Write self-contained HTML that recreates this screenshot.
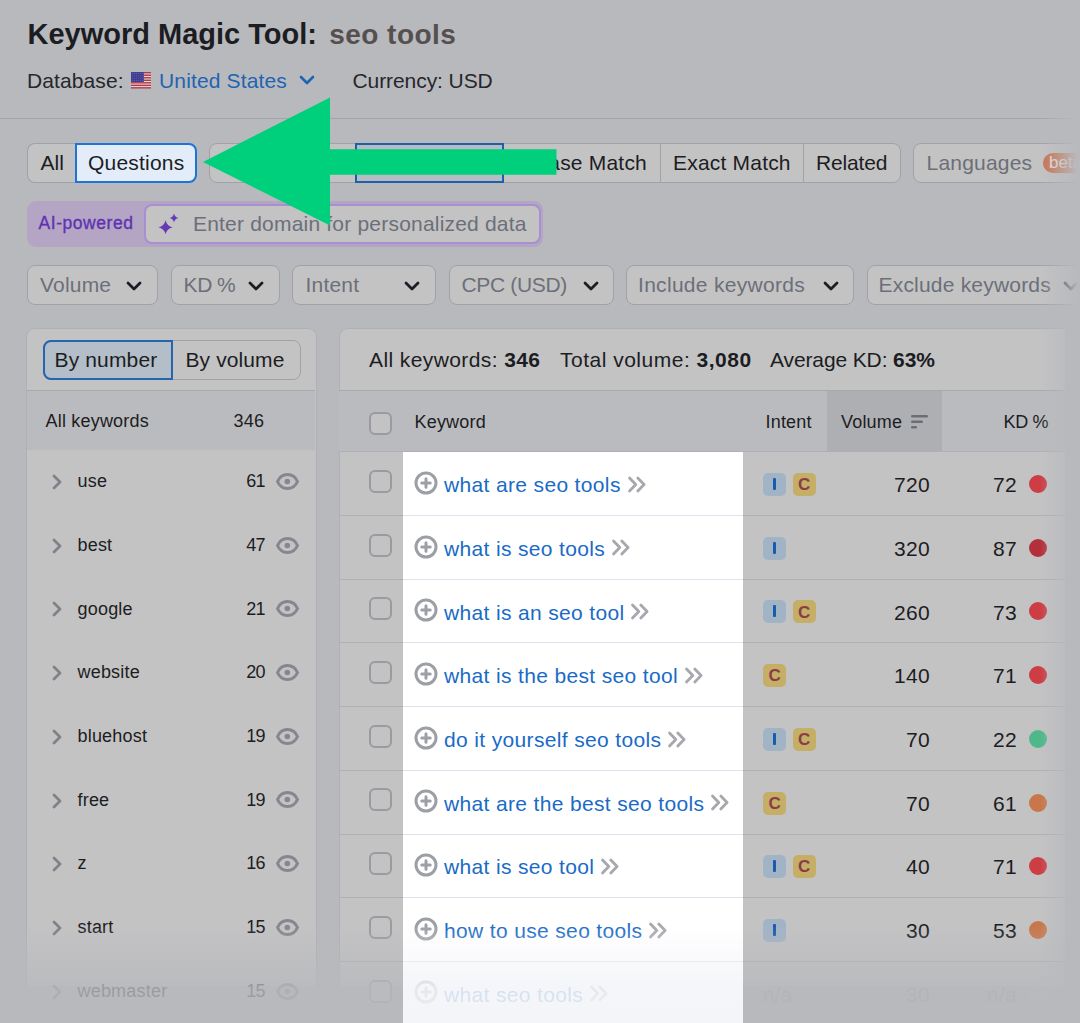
<!DOCTYPE html>
<html><head><meta charset="utf-8"><style>
html,body{margin:0;padding:0;width:1080px;height:1023px;overflow:hidden;background:#b8b9bd;}
body{position:relative;font-family:"Liberation Sans", sans-serif;}
.t{position:absolute;white-space:nowrap;}
b{font-weight:700}
</style></head><body>
<div class="t" style="left:27.5px;top:20.0px;font-size:29px;line-height:29px;color:#1c1d22;font-weight:700;letter-spacing:0px;">Keyword Magic Tool:</div><div class="t" style="left:329.3px;top:20.6px;font-size:28px;line-height:28px;color:#55504f;font-weight:700;letter-spacing:0.45px;">seo tools</div><div class="t" style="left:27.0px;top:70.1px;font-size:21px;line-height:21px;color:#26272c;font-weight:400;letter-spacing:0.1px;">Database:</div><svg style="position:absolute;left:131px;top:71.6px" width="20" height="17" viewBox="0 0 20 17"><rect x="0" y="0" width="20" height="16.4" fill="#dcdce2"/><rect x="0" y="0.00" width="20" height="1.45" fill="#b33a44"/><rect x="0" y="2.52" width="20" height="1.45" fill="#b33a44"/><rect x="0" y="5.05" width="20" height="1.45" fill="#b33a44"/><rect x="0" y="7.57" width="20" height="1.45" fill="#b33a44"/><rect x="0" y="10.09" width="20" height="1.45" fill="#b33a44"/><rect x="0" y="12.62" width="20" height="1.45" fill="#b33a44"/><rect x="0" y="15.14" width="20" height="1.45" fill="#b33a44"/><rect x="0" y="0" width="12.8" height="10" fill="#403d92"/><circle cx="1.50" cy="1.40" r="0.55" fill="#6664ac"/><circle cx="1.50" cy="3.75" r="0.55" fill="#6664ac"/><circle cx="1.50" cy="6.10" r="0.55" fill="#6664ac"/><circle cx="1.50" cy="8.45" r="0.55" fill="#6664ac"/><circle cx="3.55" cy="1.40" r="0.55" fill="#6664ac"/><circle cx="3.55" cy="3.75" r="0.55" fill="#6664ac"/><circle cx="3.55" cy="6.10" r="0.55" fill="#6664ac"/><circle cx="3.55" cy="8.45" r="0.55" fill="#6664ac"/><circle cx="5.60" cy="1.40" r="0.55" fill="#6664ac"/><circle cx="5.60" cy="3.75" r="0.55" fill="#6664ac"/><circle cx="5.60" cy="6.10" r="0.55" fill="#6664ac"/><circle cx="5.60" cy="8.45" r="0.55" fill="#6664ac"/><circle cx="7.65" cy="1.40" r="0.55" fill="#6664ac"/><circle cx="7.65" cy="3.75" r="0.55" fill="#6664ac"/><circle cx="7.65" cy="6.10" r="0.55" fill="#6664ac"/><circle cx="7.65" cy="8.45" r="0.55" fill="#6664ac"/><circle cx="9.70" cy="1.40" r="0.55" fill="#6664ac"/><circle cx="9.70" cy="3.75" r="0.55" fill="#6664ac"/><circle cx="9.70" cy="6.10" r="0.55" fill="#6664ac"/><circle cx="9.70" cy="8.45" r="0.55" fill="#6664ac"/><circle cx="11.75" cy="1.40" r="0.55" fill="#6664ac"/><circle cx="11.75" cy="3.75" r="0.55" fill="#6664ac"/><circle cx="11.75" cy="6.10" r="0.55" fill="#6664ac"/><circle cx="11.75" cy="8.45" r="0.55" fill="#6664ac"/></svg><div class="t" style="left:159.0px;top:70.1px;font-size:21px;line-height:21px;color:#1e64b2;font-weight:400;letter-spacing:0.15px;">United States</div><svg style="position:absolute;left:299px;top:75px" width="16" height="11" viewBox="0 0 16 11"><path d="M2 2 L8 8 L14 2" fill="none" stroke="#1e64b2" stroke-width="2.6" stroke-linecap="round" stroke-linejoin="round"/></svg><div class="t" style="left:352.5px;top:70.1px;font-size:21px;line-height:21px;color:#26272c;font-weight:400;letter-spacing:-0.08px;">Currency: USD</div><div style="position:absolute;left:0px;top:118px;width:1080px;height:1px;box-sizing:border-box;background:#a3a4a8"></div><div style="position:absolute;left:27px;top:143px;width:49px;height:40px;box-sizing:border-box;background:#c3c3c4;border:1px solid #a0a2a8;border-right:none;border-radius:8px 0 0 8px"></div><div class="t" style="left:40.5px;top:152.4px;font-size:21px;line-height:21px;color:#1c1d22;font-weight:400;letter-spacing:0px;">All</div><div style="position:absolute;left:209px;top:143px;width:692px;height:40px;box-sizing:border-box;background:#c3c3c4;border:1px solid #a0a2a8;border-radius:8px"></div><div style="position:absolute;left:660px;top:143px;width:1px;height:40px;box-sizing:border-box;background:#a0a2a8"></div><div style="position:absolute;left:803px;top:143px;width:1px;height:40px;box-sizing:border-box;background:#a0a2a8"></div><div style="position:absolute;left:355px;top:143px;width:149px;height:40px;box-sizing:border-box;background:#b5bcc6;border:2px solid #1f5fa8"></div><div class="t" style="left:515.0px;top:152.4px;font-size:21px;line-height:21px;color:#1c1d22;font-weight:400;letter-spacing:0.2px;">Phrase Match</div><div class="t" style="left:673.0px;top:152.4px;font-size:21px;line-height:21px;color:#1c1d22;font-weight:400;letter-spacing:0.2px;">Exact Match</div><div class="t" style="left:816.0px;top:152.4px;font-size:21px;line-height:21px;color:#1c1d22;font-weight:400;letter-spacing:-0.15px;">Related</div><div style="position:absolute;left:913px;top:143px;width:200px;height:40px;box-sizing:border-box;background:#c3c3c4;border:1px solid #a0a2a8;border-radius:8px"></div><div class="t" style="left:926.5px;top:152.4px;font-size:21px;line-height:21px;color:#6c6f78;font-weight:400;letter-spacing:0.2px;">Languages</div><div style="position:absolute;left:1043px;top:153px;width:50px;height:20px;box-sizing:border-box;background:#c8704a;border-radius:10px"></div><div class="t" style="left:1049.0px;top:154.1px;font-size:17px;line-height:17px;color:#e4e2e2;font-weight:400;letter-spacing:0px;">beta</div><div style="position:absolute;left:27px;top:201px;width:516px;height:46px;box-sizing:border-box;background:#b4a5c4;border-radius:9px"></div><div class="t" style="left:38.5px;top:214.6px;font-size:17.5px;line-height:17.5px;color:#5f33b0;font-weight:400;letter-spacing:0.55px;-webkit-text-stroke:0.35px #5f33b0">AI-powered</div><div style="position:absolute;left:144px;top:204px;width:397px;height:40px;box-sizing:border-box;background:#c3c3c4;border:2px solid #a88fd0;border-radius:8px"></div><svg style="position:absolute;left:157px;top:212px" width="24" height="24" viewBox="0 0 24 24"><path d="M8.55 8.15 Q9.850000000000001 13.95 15.65 15.25 Q9.850000000000001 16.55 8.55 22.35 Q7.250000000000001 16.55 1.450000000000001 15.25 Q7.250000000000001 13.95 8.55 8.15Z M17 1.4500000000000002 Q17.8 5.15 21.5 5.95 Q17.8 6.75 17 10.45 Q16.2 6.75 12.5 5.95 Q16.2 5.15 17 1.4500000000000002Z" fill="#6639b5"/></svg><div class="t" style="left:193.0px;top:212.8px;font-size:21px;line-height:21px;color:#6c6f78;font-weight:400;letter-spacing:0.2px;">Enter domain for personalized data</div><div style="position:absolute;left:27px;top:265px;width:131px;height:40px;box-sizing:border-box;background:#c3c3c4;border:1px solid #a0a2a8;border-radius:8px"></div><div class="t" style="left:40.0px;top:274.2px;font-size:21px;line-height:21px;color:#6c6f78;font-weight:400;letter-spacing:0.2px;">Volume</div><svg style="position:absolute;left:124.5px;top:279.8px" width="18" height="12" viewBox="0 0 18 12"><path d="M3 3 L9 9 L15 3" fill="none" stroke="#1c1d22" stroke-width="2.8" stroke-linecap="round" stroke-linejoin="round"/></svg><div style="position:absolute;left:171px;top:265px;width:109px;height:40px;box-sizing:border-box;background:#c3c3c4;border:1px solid #a0a2a8;border-radius:8px"></div><div class="t" style="left:183.5px;top:274.2px;font-size:21px;line-height:21px;color:#6c6f78;font-weight:400;letter-spacing:-0.3px;word-spacing:-0.5px">KD %</div><svg style="position:absolute;left:246.5px;top:279.8px" width="18" height="12" viewBox="0 0 18 12"><path d="M3 3 L9 9 L15 3" fill="none" stroke="#1c1d22" stroke-width="2.8" stroke-linecap="round" stroke-linejoin="round"/></svg><div style="position:absolute;left:292px;top:265px;width:144px;height:40px;box-sizing:border-box;background:#c3c3c4;border:1px solid #a0a2a8;border-radius:8px"></div><div class="t" style="left:305.5px;top:274.2px;font-size:21px;line-height:21px;color:#6c6f78;font-weight:400;letter-spacing:0.2px;">Intent</div><svg style="position:absolute;left:403px;top:279.8px" width="18" height="12" viewBox="0 0 18 12"><path d="M3 3 L9 9 L15 3" fill="none" stroke="#1c1d22" stroke-width="2.8" stroke-linecap="round" stroke-linejoin="round"/></svg><div style="position:absolute;left:449px;top:265px;width:165px;height:40px;box-sizing:border-box;background:#c3c3c4;border:1px solid #a0a2a8;border-radius:8px"></div><div class="t" style="left:461.5px;top:274.2px;font-size:21px;line-height:21px;color:#6c6f78;font-weight:400;letter-spacing:-0.35px;">CPC (USD)</div><svg style="position:absolute;left:581.5px;top:279.8px" width="18" height="12" viewBox="0 0 18 12"><path d="M3 3 L9 9 L15 3" fill="none" stroke="#1c1d22" stroke-width="2.8" stroke-linecap="round" stroke-linejoin="round"/></svg><div style="position:absolute;left:626px;top:265px;width:228px;height:40px;box-sizing:border-box;background:#c3c3c4;border:1px solid #a0a2a8;border-radius:8px"></div><div class="t" style="left:638.0px;top:274.2px;font-size:21px;line-height:21px;color:#6c6f78;font-weight:400;letter-spacing:0.3px;">Include keywords</div><svg style="position:absolute;left:821.5px;top:279.8px" width="18" height="12" viewBox="0 0 18 12"><path d="M3 3 L9 9 L15 3" fill="none" stroke="#1c1d22" stroke-width="2.8" stroke-linecap="round" stroke-linejoin="round"/></svg><div style="position:absolute;left:867px;top:265px;width:250px;height:40px;box-sizing:border-box;background:#c3c3c4;border:1px solid #a0a2a8;border-radius:8px"></div><div class="t" style="left:878.5px;top:274.2px;font-size:21px;line-height:21px;color:#6c6f78;font-weight:400;letter-spacing:0.2px;">Exclude keywords</div><svg style="position:absolute;left:1062px;top:279.8px" width="18" height="12" viewBox="0 0 18 12"><path d="M3 3 L9 9 L15 3" fill="none" stroke="#1c1d22" stroke-width="2.8" stroke-linecap="round" stroke-linejoin="round"/></svg><div style="position:absolute;left:26px;top:328px;width:291px;height:658px;box-sizing:border-box;background:#c3c3c4;border:1px solid #b0b1b5;border-bottom:none;border-radius:9px 9px 0 0"></div><div style="position:absolute;left:43px;top:340px;width:258px;height:40px;box-sizing:border-box;background:#c3c3c4;border:1px solid #a0a2a8;border-radius:8px"></div><div style="position:absolute;left:43px;top:340px;width:130px;height:40px;box-sizing:border-box;background:#b3bec8;border:2px solid #2466ad;border-radius:8px 0 0 8px"></div><div class="t" style="left:54.5px;top:349.0px;font-size:21px;line-height:21px;color:#1c1d22;font-weight:400;letter-spacing:0.15px;">By number</div><div class="t" style="left:185.5px;top:349.0px;font-size:21px;line-height:21px;color:#1c1d22;font-weight:400;letter-spacing:0.1px;">By volume</div><div style="position:absolute;left:27px;top:390px;width:288px;height:1px;box-sizing:border-box;background:#a8a9ad"></div><div style="position:absolute;left:27px;top:391px;width:288px;height:59px;box-sizing:border-box;background:#babbbe"></div><div class="t" style="left:45.5px;top:411.6px;font-size:18px;line-height:18px;color:#1c1d22;font-weight:400;letter-spacing:0.2px;">All keywords</div><div class="t" style="left:233.5px;top:411.6px;font-size:18px;line-height:18px;color:#1c1d22;font-weight:400;letter-spacing:0.2px;">346</div><svg style="position:absolute;left:50px;top:474.0px" width="14" height="16" viewBox="0 0 14 16"><path d="M4 2 L10 8 L4 14" fill="none" stroke="#808289" stroke-width="2.8" stroke-linecap="round" stroke-linejoin="round"/></svg><div class="t" style="left:77.5px;top:472.1px;font-size:18px;line-height:18px;color:#1c1d22;font-weight:400;letter-spacing:0.2px;">use</div><div class="t" style="left:200.0px;top:472.1px;font-size:18px;line-height:18px;color:#1c1d22;font-weight:400;letter-spacing:-0.6px;width:65px;text-align:right">61</div><svg style="position:absolute;left:275px;top:471.9px" width="25" height="19" viewBox="0 0 25 19"><path d="M2.5 9.5 C6.5 0.2, 18.5 0.2, 22.5 9.5 C18.5 18.8, 6.5 18.8, 2.5 9.5Z" fill="none" stroke="#85878e" stroke-width="3"/><circle cx="12.3" cy="9.5" r="2.8" fill="#85878e"/></svg><svg style="position:absolute;left:50px;top:537.7px" width="14" height="16" viewBox="0 0 14 16"><path d="M4 2 L10 8 L4 14" fill="none" stroke="#808289" stroke-width="2.8" stroke-linecap="round" stroke-linejoin="round"/></svg><div class="t" style="left:77.5px;top:535.8px;font-size:18px;line-height:18px;color:#1c1d22;font-weight:400;letter-spacing:0.2px;">best</div><div class="t" style="left:200.0px;top:535.8px;font-size:18px;line-height:18px;color:#1c1d22;font-weight:400;letter-spacing:-0.6px;width:65px;text-align:right">47</div><svg style="position:absolute;left:275px;top:535.6px" width="25" height="19" viewBox="0 0 25 19"><path d="M2.5 9.5 C6.5 0.2, 18.5 0.2, 22.5 9.5 C18.5 18.8, 6.5 18.8, 2.5 9.5Z" fill="none" stroke="#85878e" stroke-width="3"/><circle cx="12.3" cy="9.5" r="2.8" fill="#85878e"/></svg><svg style="position:absolute;left:50px;top:601.4px" width="14" height="16" viewBox="0 0 14 16"><path d="M4 2 L10 8 L4 14" fill="none" stroke="#808289" stroke-width="2.8" stroke-linecap="round" stroke-linejoin="round"/></svg><div class="t" style="left:77.5px;top:599.5px;font-size:18px;line-height:18px;color:#1c1d22;font-weight:400;letter-spacing:0.2px;">google</div><div class="t" style="left:200.0px;top:599.5px;font-size:18px;line-height:18px;color:#1c1d22;font-weight:400;letter-spacing:-0.6px;width:65px;text-align:right">21</div><svg style="position:absolute;left:275px;top:599.3px" width="25" height="19" viewBox="0 0 25 19"><path d="M2.5 9.5 C6.5 0.2, 18.5 0.2, 22.5 9.5 C18.5 18.8, 6.5 18.8, 2.5 9.5Z" fill="none" stroke="#85878e" stroke-width="3"/><circle cx="12.3" cy="9.5" r="2.8" fill="#85878e"/></svg><svg style="position:absolute;left:50px;top:665.1px" width="14" height="16" viewBox="0 0 14 16"><path d="M4 2 L10 8 L4 14" fill="none" stroke="#808289" stroke-width="2.8" stroke-linecap="round" stroke-linejoin="round"/></svg><div class="t" style="left:77.5px;top:663.2px;font-size:18px;line-height:18px;color:#1c1d22;font-weight:400;letter-spacing:0.2px;">website</div><div class="t" style="left:200.0px;top:663.2px;font-size:18px;line-height:18px;color:#1c1d22;font-weight:400;letter-spacing:-0.6px;width:65px;text-align:right">20</div><svg style="position:absolute;left:275px;top:663.0px" width="25" height="19" viewBox="0 0 25 19"><path d="M2.5 9.5 C6.5 0.2, 18.5 0.2, 22.5 9.5 C18.5 18.8, 6.5 18.8, 2.5 9.5Z" fill="none" stroke="#85878e" stroke-width="3"/><circle cx="12.3" cy="9.5" r="2.8" fill="#85878e"/></svg><svg style="position:absolute;left:50px;top:728.8px" width="14" height="16" viewBox="0 0 14 16"><path d="M4 2 L10 8 L4 14" fill="none" stroke="#808289" stroke-width="2.8" stroke-linecap="round" stroke-linejoin="round"/></svg><div class="t" style="left:77.5px;top:726.9px;font-size:18px;line-height:18px;color:#1c1d22;font-weight:400;letter-spacing:0.2px;">bluehost</div><div class="t" style="left:200.0px;top:726.9px;font-size:18px;line-height:18px;color:#1c1d22;font-weight:400;letter-spacing:-0.6px;width:65px;text-align:right">19</div><svg style="position:absolute;left:275px;top:726.7px" width="25" height="19" viewBox="0 0 25 19"><path d="M2.5 9.5 C6.5 0.2, 18.5 0.2, 22.5 9.5 C18.5 18.8, 6.5 18.8, 2.5 9.5Z" fill="none" stroke="#85878e" stroke-width="3"/><circle cx="12.3" cy="9.5" r="2.8" fill="#85878e"/></svg><svg style="position:absolute;left:50px;top:792.5px" width="14" height="16" viewBox="0 0 14 16"><path d="M4 2 L10 8 L4 14" fill="none" stroke="#808289" stroke-width="2.8" stroke-linecap="round" stroke-linejoin="round"/></svg><div class="t" style="left:77.5px;top:790.6px;font-size:18px;line-height:18px;color:#1c1d22;font-weight:400;letter-spacing:0.2px;">free</div><div class="t" style="left:200.0px;top:790.6px;font-size:18px;line-height:18px;color:#1c1d22;font-weight:400;letter-spacing:-0.6px;width:65px;text-align:right">19</div><svg style="position:absolute;left:275px;top:790.4px" width="25" height="19" viewBox="0 0 25 19"><path d="M2.5 9.5 C6.5 0.2, 18.5 0.2, 22.5 9.5 C18.5 18.8, 6.5 18.8, 2.5 9.5Z" fill="none" stroke="#85878e" stroke-width="3"/><circle cx="12.3" cy="9.5" r="2.8" fill="#85878e"/></svg><svg style="position:absolute;left:50px;top:856.2px" width="14" height="16" viewBox="0 0 14 16"><path d="M4 2 L10 8 L4 14" fill="none" stroke="#808289" stroke-width="2.8" stroke-linecap="round" stroke-linejoin="round"/></svg><div class="t" style="left:77.5px;top:854.3px;font-size:18px;line-height:18px;color:#1c1d22;font-weight:400;letter-spacing:0.2px;">z</div><div class="t" style="left:200.0px;top:854.3px;font-size:18px;line-height:18px;color:#1c1d22;font-weight:400;letter-spacing:-0.6px;width:65px;text-align:right">16</div><svg style="position:absolute;left:275px;top:854.1px" width="25" height="19" viewBox="0 0 25 19"><path d="M2.5 9.5 C6.5 0.2, 18.5 0.2, 22.5 9.5 C18.5 18.8, 6.5 18.8, 2.5 9.5Z" fill="none" stroke="#85878e" stroke-width="3"/><circle cx="12.3" cy="9.5" r="2.8" fill="#85878e"/></svg><svg style="position:absolute;left:50px;top:919.9000000000001px" width="14" height="16" viewBox="0 0 14 16"><path d="M4 2 L10 8 L4 14" fill="none" stroke="#808289" stroke-width="2.8" stroke-linecap="round" stroke-linejoin="round"/></svg><div class="t" style="left:77.5px;top:918.0px;font-size:18px;line-height:18px;color:#1c1d22;font-weight:400;letter-spacing:0.2px;">start</div><div class="t" style="left:200.0px;top:918.0px;font-size:18px;line-height:18px;color:#1c1d22;font-weight:400;letter-spacing:-0.6px;width:65px;text-align:right">15</div><svg style="position:absolute;left:275px;top:917.8px" width="25" height="19" viewBox="0 0 25 19"><path d="M2.5 9.5 C6.5 0.2, 18.5 0.2, 22.5 9.5 C18.5 18.8, 6.5 18.8, 2.5 9.5Z" fill="none" stroke="#85878e" stroke-width="3"/><circle cx="12.3" cy="9.5" r="2.8" fill="#85878e"/></svg><svg style="position:absolute;left:50px;top:983.6px" width="14" height="16" viewBox="0 0 14 16"><path d="M4 2 L10 8 L4 14" fill="none" stroke="#808289" stroke-width="2.8" stroke-linecap="round" stroke-linejoin="round"/></svg><div class="t" style="left:77.5px;top:981.7px;font-size:18px;line-height:18px;color:#1c1d22;font-weight:400;letter-spacing:0.2px;">webmaster</div><div class="t" style="left:200.0px;top:981.7px;font-size:18px;line-height:18px;color:#1c1d22;font-weight:400;letter-spacing:-0.6px;width:65px;text-align:right">15</div><svg style="position:absolute;left:275px;top:981.5px" width="25" height="19" viewBox="0 0 25 19"><path d="M2.5 9.5 C6.5 0.2, 18.5 0.2, 22.5 9.5 C18.5 18.8, 6.5 18.8, 2.5 9.5Z" fill="none" stroke="#85878e" stroke-width="3"/><circle cx="12.3" cy="9.5" r="2.8" fill="#85878e"/></svg><div style="position:absolute;left:339px;top:328px;width:726px;height:658px;box-sizing:border-box;background:#c3c3c4;border:1px solid #b0b1b5;border-bottom:none;border-right:none;border-radius:9px 0 0 0"></div><div class="t" style="left:369.0px;top:349.2px;font-size:21px;line-height:21px;color:#1c1d22;font-weight:400;letter-spacing:0.4px;">All keywords: <b>346</b></div><div class="t" style="left:560.0px;top:349.2px;font-size:21px;line-height:21px;color:#1c1d22;font-weight:400;letter-spacing:0.5px;">Total volume: <b>3,080</b></div><div class="t" style="left:770.0px;top:349.2px;font-size:21px;line-height:21px;color:#1c1d22;font-weight:400;letter-spacing:-0.12px;">Average KD: <b>63%</b></div><div style="position:absolute;left:339px;top:390px;width:726px;height:1px;box-sizing:border-box;background:#a8a9ad"></div><div style="position:absolute;left:339px;top:391px;width:726px;height:61px;box-sizing:border-box;background:#babbbe"></div><div style="position:absolute;left:827px;top:391px;width:115px;height:61px;box-sizing:border-box;background:#aeafb2"></div><div style="position:absolute;left:339px;top:451px;width:726px;height:1px;box-sizing:border-box;background:#afb0b4"></div><div style="position:absolute;left:368.8px;top:412.1px;width:23px;height:23px;box-sizing:border-box;background:#c3c3c4;border:2px solid #999ba1;border-radius:6px"></div><div class="t" style="left:414.5px;top:413.1px;font-size:18px;line-height:18px;color:#1c1d22;font-weight:400;letter-spacing:0.2px;">Keyword</div><div class="t" style="left:765.5px;top:413.1px;font-size:18px;line-height:18px;color:#1c1d22;font-weight:400;letter-spacing:0.2px;">Intent</div><div class="t" style="left:841.0px;top:413.1px;font-size:18px;line-height:18px;color:#1c1d22;font-weight:400;letter-spacing:0.2px;">Volume</div><svg style="position:absolute;left:910px;top:414px" width="20" height="16" viewBox="0 0 20 16"><rect x="1" y="1" width="17" height="2.6" rx="1.3" fill="#6b6e75"/><rect x="1" y="6.5" width="12" height="2.6" rx="1.3" fill="#6b6e75"/><rect x="1" y="12" width="6" height="2.6" rx="1.3" fill="#6b6e75"/></svg><div class="t" style="left:1003.5px;top:413.1px;font-size:18px;line-height:18px;color:#1c1d22;font-weight:400;letter-spacing:-0.3px;">KD %</div><div style="position:absolute;left:339px;top:515px;width:726px;height:1px;box-sizing:border-box;background:#afb0b4"></div><div style="position:absolute;left:368.8px;top:469.9px;width:23px;height:23px;box-sizing:border-box;background:#c3c3c4;border:2px solid #999ba1;border-radius:6px"></div><div style="position:absolute;left:763px;top:473px;width:23px;height:23px;box-sizing:border-box;background:#a1b4c6;border-radius:5px"><div style="position:absolute;left:10px;top:4.8px;width:3px;height:12.4px;background:#1a5cab;border-radius:1px"></div></div><div style="position:absolute;left:792.5px;top:473px;width:23px;height:23px;box-sizing:border-box;background:#c5ae65;border-radius:5px"></div><div class="t" style="left:798.0px;top:476.1px;font-size:17px;line-height:17px;color:#8a3c47;font-weight:700;letter-spacing:0px;">C</div><div class="t" style="left:830.0px;top:474.2px;font-size:21px;line-height:21px;color:#1c1d22;font-weight:400;letter-spacing:0.3px;width:100px;text-align:right">720</div><div class="t" style="left:917.0px;top:474.2px;font-size:21px;line-height:21px;color:#1c1d22;font-weight:400;letter-spacing:0.3px;width:100px;text-align:right">72</div><div style="position:absolute;left:1029px;top:475px;width:18px;height:18px;box-sizing:border-box;background:#cc3d44;border-radius:50%"></div><div style="position:absolute;left:339px;top:579px;width:726px;height:1px;box-sizing:border-box;background:#afb0b4"></div><div style="position:absolute;left:368.8px;top:533.6px;width:23px;height:23px;box-sizing:border-box;background:#c3c3c4;border:2px solid #999ba1;border-radius:6px"></div><div style="position:absolute;left:763px;top:537px;width:23px;height:23px;box-sizing:border-box;background:#a1b4c6;border-radius:5px"><div style="position:absolute;left:10px;top:4.8px;width:3px;height:12.4px;background:#1a5cab;border-radius:1px"></div></div><div class="t" style="left:830.0px;top:537.9px;font-size:21px;line-height:21px;color:#1c1d22;font-weight:400;letter-spacing:0.3px;width:100px;text-align:right">320</div><div class="t" style="left:917.0px;top:537.9px;font-size:21px;line-height:21px;color:#1c1d22;font-weight:400;letter-spacing:0.3px;width:100px;text-align:right">87</div><div style="position:absolute;left:1029px;top:539px;width:18px;height:18px;box-sizing:border-box;background:#b3303b;border-radius:50%"></div><div style="position:absolute;left:339px;top:642px;width:726px;height:1px;box-sizing:border-box;background:#afb0b4"></div><div style="position:absolute;left:368.8px;top:597.3px;width:23px;height:23px;box-sizing:border-box;background:#c3c3c4;border:2px solid #999ba1;border-radius:6px"></div><div style="position:absolute;left:763px;top:600px;width:23px;height:23px;box-sizing:border-box;background:#a1b4c6;border-radius:5px"><div style="position:absolute;left:10px;top:4.8px;width:3px;height:12.4px;background:#1a5cab;border-radius:1px"></div></div><div style="position:absolute;left:792.5px;top:600px;width:23px;height:23px;box-sizing:border-box;background:#c5ae65;border-radius:5px"></div><div class="t" style="left:798.0px;top:603.5px;font-size:17px;line-height:17px;color:#8a3c47;font-weight:700;letter-spacing:0px;">C</div><div class="t" style="left:830.0px;top:601.6px;font-size:21px;line-height:21px;color:#1c1d22;font-weight:400;letter-spacing:0.3px;width:100px;text-align:right">260</div><div class="t" style="left:917.0px;top:601.6px;font-size:21px;line-height:21px;color:#1c1d22;font-weight:400;letter-spacing:0.3px;width:100px;text-align:right">73</div><div style="position:absolute;left:1029px;top:602px;width:18px;height:18px;box-sizing:border-box;background:#cc3d44;border-radius:50%"></div><div style="position:absolute;left:339px;top:706px;width:726px;height:1px;box-sizing:border-box;background:#afb0b4"></div><div style="position:absolute;left:368.8px;top:661.0px;width:23px;height:23px;box-sizing:border-box;background:#c3c3c4;border:2px solid #999ba1;border-radius:6px"></div><div style="position:absolute;left:763px;top:664px;width:23px;height:23px;box-sizing:border-box;background:#c5ae65;border-radius:5px"></div><div class="t" style="left:768.5px;top:667.2px;font-size:17px;line-height:17px;color:#8a3c47;font-weight:700;letter-spacing:0px;">C</div><div class="t" style="left:830.0px;top:665.3px;font-size:21px;line-height:21px;color:#1c1d22;font-weight:400;letter-spacing:0.3px;width:100px;text-align:right">140</div><div class="t" style="left:917.0px;top:665.3px;font-size:21px;line-height:21px;color:#1c1d22;font-weight:400;letter-spacing:0.3px;width:100px;text-align:right">71</div><div style="position:absolute;left:1029px;top:666px;width:18px;height:18px;box-sizing:border-box;background:#cc3d44;border-radius:50%"></div><div style="position:absolute;left:339px;top:770px;width:726px;height:1px;box-sizing:border-box;background:#afb0b4"></div><div style="position:absolute;left:368.8px;top:724.7px;width:23px;height:23px;box-sizing:border-box;background:#c3c3c4;border:2px solid #999ba1;border-radius:6px"></div><div style="position:absolute;left:763px;top:728px;width:23px;height:23px;box-sizing:border-box;background:#a1b4c6;border-radius:5px"><div style="position:absolute;left:10px;top:4.8px;width:3px;height:12.4px;background:#1a5cab;border-radius:1px"></div></div><div style="position:absolute;left:792.5px;top:728px;width:23px;height:23px;box-sizing:border-box;background:#c5ae65;border-radius:5px"></div><div class="t" style="left:798.0px;top:730.9px;font-size:17px;line-height:17px;color:#8a3c47;font-weight:700;letter-spacing:0px;">C</div><div class="t" style="left:830.0px;top:729.0px;font-size:21px;line-height:21px;color:#1c1d22;font-weight:400;letter-spacing:0.3px;width:100px;text-align:right">70</div><div class="t" style="left:917.0px;top:729.0px;font-size:21px;line-height:21px;color:#1c1d22;font-weight:400;letter-spacing:0.3px;width:100px;text-align:right">22</div><div style="position:absolute;left:1029px;top:730px;width:18px;height:18px;box-sizing:border-box;background:#4fb88a;border-radius:50%"></div><div style="position:absolute;left:339px;top:834px;width:726px;height:1px;box-sizing:border-box;background:#afb0b4"></div><div style="position:absolute;left:368.8px;top:788.4px;width:23px;height:23px;box-sizing:border-box;background:#c3c3c4;border:2px solid #999ba1;border-radius:6px"></div><div style="position:absolute;left:763px;top:792px;width:23px;height:23px;box-sizing:border-box;background:#c5ae65;border-radius:5px"></div><div class="t" style="left:768.5px;top:794.6px;font-size:17px;line-height:17px;color:#8a3c47;font-weight:700;letter-spacing:0px;">C</div><div class="t" style="left:830.0px;top:792.7px;font-size:21px;line-height:21px;color:#1c1d22;font-weight:400;letter-spacing:0.3px;width:100px;text-align:right">70</div><div class="t" style="left:917.0px;top:792.7px;font-size:21px;line-height:21px;color:#1c1d22;font-weight:400;letter-spacing:0.3px;width:100px;text-align:right">61</div><div style="position:absolute;left:1029px;top:794px;width:18px;height:18px;box-sizing:border-box;background:#c8764a;border-radius:50%"></div><div style="position:absolute;left:339px;top:897px;width:726px;height:1px;box-sizing:border-box;background:#afb0b4"></div><div style="position:absolute;left:368.8px;top:852.1px;width:23px;height:23px;box-sizing:border-box;background:#c3c3c4;border:2px solid #999ba1;border-radius:6px"></div><div style="position:absolute;left:763px;top:855px;width:23px;height:23px;box-sizing:border-box;background:#a1b4c6;border-radius:5px"><div style="position:absolute;left:10px;top:4.8px;width:3px;height:12.4px;background:#1a5cab;border-radius:1px"></div></div><div style="position:absolute;left:792.5px;top:855px;width:23px;height:23px;box-sizing:border-box;background:#c5ae65;border-radius:5px"></div><div class="t" style="left:798.0px;top:858.3px;font-size:17px;line-height:17px;color:#8a3c47;font-weight:700;letter-spacing:0px;">C</div><div class="t" style="left:830.0px;top:856.4px;font-size:21px;line-height:21px;color:#1c1d22;font-weight:400;letter-spacing:0.3px;width:100px;text-align:right">40</div><div class="t" style="left:917.0px;top:856.4px;font-size:21px;line-height:21px;color:#1c1d22;font-weight:400;letter-spacing:0.3px;width:100px;text-align:right">71</div><div style="position:absolute;left:1029px;top:857px;width:18px;height:18px;box-sizing:border-box;background:#cc3d44;border-radius:50%"></div><div style="position:absolute;left:339px;top:961px;width:726px;height:1px;box-sizing:border-box;background:#afb0b4"></div><div style="position:absolute;left:368.8px;top:915.8px;width:23px;height:23px;box-sizing:border-box;background:#c3c3c4;border:2px solid #999ba1;border-radius:6px"></div><div style="position:absolute;left:763px;top:919px;width:23px;height:23px;box-sizing:border-box;background:#a1b4c6;border-radius:5px"><div style="position:absolute;left:10px;top:4.8px;width:3px;height:12.4px;background:#1a5cab;border-radius:1px"></div></div><div class="t" style="left:830.0px;top:920.1px;font-size:21px;line-height:21px;color:#1c1d22;font-weight:400;letter-spacing:0.3px;width:100px;text-align:right">30</div><div class="t" style="left:917.0px;top:920.1px;font-size:21px;line-height:21px;color:#1c1d22;font-weight:400;letter-spacing:0.3px;width:100px;text-align:right">53</div><div style="position:absolute;left:1029px;top:921px;width:18px;height:18px;box-sizing:border-box;background:#c8764a;border-radius:50%"></div><div style="position:absolute;left:339px;top:1025px;width:726px;height:1px;box-sizing:border-box;background:#afb0b4"></div><div style="position:absolute;left:368.8px;top:979.5px;width:23px;height:23px;box-sizing:border-box;background:#c3c3c4;border:2px solid #999ba1;border-radius:6px"></div><div class="t" style="left:763.0px;top:983.8px;font-size:21px;line-height:21px;color:#9fa0a4;font-weight:400;letter-spacing:0px;">n/a</div><div class="t" style="left:830.0px;top:983.8px;font-size:21px;line-height:21px;color:#9fa0a4;font-weight:400;letter-spacing:0.3px;width:100px;text-align:right">30</div><div class="t" style="left:917.0px;top:983.8px;font-size:21px;line-height:21px;color:#9fa0a4;font-weight:400;letter-spacing:0.3px;width:100px;text-align:right">n/a</div><div style="position:absolute;left:1029px;top:985px;width:18px;height:18px;box-sizing:border-box;background:#bdbdbf;border-radius:50%"></div><div style="position:absolute;left:0px;top:925px;width:1080px;height:98px;box-sizing:border-box;background:linear-gradient(to bottom, rgba(184,185,189,0) 0px, rgba(184,185,189,0.8) 62px, rgba(184,185,189,0.86) 98px)"></div><div style="position:absolute;left:1040px;top:100px;width:40px;height:923px;box-sizing:border-box;background:linear-gradient(to right, rgba(184,185,189,0), #b8b9bd 38px)"></div>
<div style="position:absolute;left:0;top:0;width:1080px;height:1023px"><div style="position:absolute;left:403px;top:452px;width:340px;height:571px;box-sizing:border-box;background:#ffffff"></div><div style="position:absolute;left:403px;top:515px;width:340px;height:1px;box-sizing:border-box;background:#dde3ec"></div><svg style="position:absolute;left:414.3px;top:470.8px" width="24" height="24" viewBox="0 0 24 24"><circle cx="12" cy="12" r="10" fill="none" stroke="#9c9fa5" stroke-width="3"/><path d="M12 7.8V16.2M7.8 12H16.2" stroke="#9c9fa5" stroke-width="3" stroke-linecap="round"/></svg><div class="t" style="left:444.0px;top:474.2px;font-size:21px;line-height:21px;color:#1a6bc6;font-weight:400;letter-spacing:0.35px;">what are seo tools<span style="display:inline-block;width:5.8px"></span><svg width="20" height="17" viewBox="0 0 20 17" style="vertical-align:-0.5px"><path d="M2.5 2 L8.8 8.5 L2.5 15 M10.8 2 L17.1 8.5 L10.8 15" fill="none" stroke="#a6a8ae" stroke-width="2.8" stroke-linecap="round" stroke-linejoin="round"/></svg></div><div style="position:absolute;left:403px;top:579px;width:340px;height:1px;box-sizing:border-box;background:#dde3ec"></div><svg style="position:absolute;left:414.3px;top:534.5px" width="24" height="24" viewBox="0 0 24 24"><circle cx="12" cy="12" r="10" fill="none" stroke="#9c9fa5" stroke-width="3"/><path d="M12 7.8V16.2M7.8 12H16.2" stroke="#9c9fa5" stroke-width="3" stroke-linecap="round"/></svg><div class="t" style="left:444.0px;top:537.9px;font-size:21px;line-height:21px;color:#1a6bc6;font-weight:400;letter-spacing:0.35px;">what is seo tools<span style="display:inline-block;width:5.8px"></span><svg width="20" height="17" viewBox="0 0 20 17" style="vertical-align:-0.5px"><path d="M2.5 2 L8.8 8.5 L2.5 15 M10.8 2 L17.1 8.5 L10.8 15" fill="none" stroke="#a6a8ae" stroke-width="2.8" stroke-linecap="round" stroke-linejoin="round"/></svg></div><div style="position:absolute;left:403px;top:642px;width:340px;height:1px;box-sizing:border-box;background:#dde3ec"></div><svg style="position:absolute;left:414.3px;top:598.2px" width="24" height="24" viewBox="0 0 24 24"><circle cx="12" cy="12" r="10" fill="none" stroke="#9c9fa5" stroke-width="3"/><path d="M12 7.8V16.2M7.8 12H16.2" stroke="#9c9fa5" stroke-width="3" stroke-linecap="round"/></svg><div class="t" style="left:444.0px;top:601.6px;font-size:21px;line-height:21px;color:#1a6bc6;font-weight:400;letter-spacing:0.35px;">what is an seo tool<span style="display:inline-block;width:5.8px"></span><svg width="20" height="17" viewBox="0 0 20 17" style="vertical-align:-0.5px"><path d="M2.5 2 L8.8 8.5 L2.5 15 M10.8 2 L17.1 8.5 L10.8 15" fill="none" stroke="#a6a8ae" stroke-width="2.8" stroke-linecap="round" stroke-linejoin="round"/></svg></div><div style="position:absolute;left:403px;top:706px;width:340px;height:1px;box-sizing:border-box;background:#dde3ec"></div><svg style="position:absolute;left:414.3px;top:661.9px" width="24" height="24" viewBox="0 0 24 24"><circle cx="12" cy="12" r="10" fill="none" stroke="#9c9fa5" stroke-width="3"/><path d="M12 7.8V16.2M7.8 12H16.2" stroke="#9c9fa5" stroke-width="3" stroke-linecap="round"/></svg><div class="t" style="left:444.0px;top:665.3px;font-size:21px;line-height:21px;color:#1a6bc6;font-weight:400;letter-spacing:0.35px;">what is the best seo tool<span style="display:inline-block;width:5.8px"></span><svg width="20" height="17" viewBox="0 0 20 17" style="vertical-align:-0.5px"><path d="M2.5 2 L8.8 8.5 L2.5 15 M10.8 2 L17.1 8.5 L10.8 15" fill="none" stroke="#a6a8ae" stroke-width="2.8" stroke-linecap="round" stroke-linejoin="round"/></svg></div><div style="position:absolute;left:403px;top:770px;width:340px;height:1px;box-sizing:border-box;background:#dde3ec"></div><svg style="position:absolute;left:414.3px;top:725.6px" width="24" height="24" viewBox="0 0 24 24"><circle cx="12" cy="12" r="10" fill="none" stroke="#9c9fa5" stroke-width="3"/><path d="M12 7.8V16.2M7.8 12H16.2" stroke="#9c9fa5" stroke-width="3" stroke-linecap="round"/></svg><div class="t" style="left:444.0px;top:729.0px;font-size:21px;line-height:21px;color:#1a6bc6;font-weight:400;letter-spacing:0.35px;">do it yourself seo tools<span style="display:inline-block;width:5.8px"></span><svg width="20" height="17" viewBox="0 0 20 17" style="vertical-align:-0.5px"><path d="M2.5 2 L8.8 8.5 L2.5 15 M10.8 2 L17.1 8.5 L10.8 15" fill="none" stroke="#a6a8ae" stroke-width="2.8" stroke-linecap="round" stroke-linejoin="round"/></svg></div><div style="position:absolute;left:403px;top:834px;width:340px;height:1px;box-sizing:border-box;background:#dde3ec"></div><svg style="position:absolute;left:414.3px;top:789.3px" width="24" height="24" viewBox="0 0 24 24"><circle cx="12" cy="12" r="10" fill="none" stroke="#9c9fa5" stroke-width="3"/><path d="M12 7.8V16.2M7.8 12H16.2" stroke="#9c9fa5" stroke-width="3" stroke-linecap="round"/></svg><div class="t" style="left:444.0px;top:792.7px;font-size:21px;line-height:21px;color:#1a6bc6;font-weight:400;letter-spacing:0.35px;">what are the best seo tools<span style="display:inline-block;width:5.8px"></span><svg width="20" height="17" viewBox="0 0 20 17" style="vertical-align:-0.5px"><path d="M2.5 2 L8.8 8.5 L2.5 15 M10.8 2 L17.1 8.5 L10.8 15" fill="none" stroke="#a6a8ae" stroke-width="2.8" stroke-linecap="round" stroke-linejoin="round"/></svg></div><div style="position:absolute;left:403px;top:897px;width:340px;height:1px;box-sizing:border-box;background:#dde3ec"></div><svg style="position:absolute;left:414.3px;top:853.0px" width="24" height="24" viewBox="0 0 24 24"><circle cx="12" cy="12" r="10" fill="none" stroke="#9c9fa5" stroke-width="3"/><path d="M12 7.8V16.2M7.8 12H16.2" stroke="#9c9fa5" stroke-width="3" stroke-linecap="round"/></svg><div class="t" style="left:444.0px;top:856.4px;font-size:21px;line-height:21px;color:#1a6bc6;font-weight:400;letter-spacing:0.35px;">what is seo tool<span style="display:inline-block;width:5.8px"></span><svg width="20" height="17" viewBox="0 0 20 17" style="vertical-align:-0.5px"><path d="M2.5 2 L8.8 8.5 L2.5 15 M10.8 2 L17.1 8.5 L10.8 15" fill="none" stroke="#a6a8ae" stroke-width="2.8" stroke-linecap="round" stroke-linejoin="round"/></svg></div><div style="position:absolute;left:403px;top:961px;width:340px;height:1px;box-sizing:border-box;background:#dde3ec"></div><svg style="position:absolute;left:414.3px;top:916.7px" width="24" height="24" viewBox="0 0 24 24"><circle cx="12" cy="12" r="10" fill="none" stroke="#9c9fa5" stroke-width="3"/><path d="M12 7.8V16.2M7.8 12H16.2" stroke="#9c9fa5" stroke-width="3" stroke-linecap="round"/></svg><div class="t" style="left:444.0px;top:920.1px;font-size:21px;line-height:21px;color:#1a6bc6;font-weight:400;letter-spacing:0.35px;">how to use seo tools<span style="display:inline-block;width:5.8px"></span><svg width="20" height="17" viewBox="0 0 20 17" style="vertical-align:-0.5px"><path d="M2.5 2 L8.8 8.5 L2.5 15 M10.8 2 L17.1 8.5 L10.8 15" fill="none" stroke="#a6a8ae" stroke-width="2.8" stroke-linecap="round" stroke-linejoin="round"/></svg></div><div style="position:absolute;left:403px;top:1025px;width:340px;height:1px;box-sizing:border-box;background:#dde3ec"></div><svg style="position:absolute;left:414.3px;top:980.4px" width="24" height="24" viewBox="0 0 24 24"><circle cx="12" cy="12" r="10" fill="none" stroke="#9c9fa5" stroke-width="3"/><path d="M12 7.8V16.2M7.8 12H16.2" stroke="#9c9fa5" stroke-width="3" stroke-linecap="round"/></svg><div class="t" style="left:444.0px;top:983.8px;font-size:21px;line-height:21px;color:#1a6bc6;font-weight:400;letter-spacing:0.35px;">what seo tools<span style="display:inline-block;width:5.8px"></span><svg width="20" height="17" viewBox="0 0 20 17" style="vertical-align:-0.5px"><path d="M2.5 2 L8.8 8.5 L2.5 15 M10.8 2 L17.1 8.5 L10.8 15" fill="none" stroke="#a6a8ae" stroke-width="2.8" stroke-linecap="round" stroke-linejoin="round"/></svg></div><div style="position:absolute;left:403px;top:925px;width:340px;height:98px;box-sizing:border-box;background:linear-gradient(to bottom, rgba(243,244,248,0) 0px, rgba(243,244,248,0.86) 62px, rgba(243,244,248,0.9) 98px)"></div><div style="position:absolute;left:75px;top:143px;width:122px;height:40px;box-sizing:border-box;background:#e3ecf9;border:2px solid #1f73d6;border-radius:0 8px 8px 0"></div><div class="t" style="left:88.0px;top:152.4px;font-size:21px;line-height:21px;color:#1c1d22;font-weight:400;letter-spacing:0.2px;">Questions</div></div>
<svg style="position:absolute;left:0;top:0" width="1080" height="1023"><path d="M203 162 L330 97.4 L330 149.3 L556.5 149.3 L556.5 174.7 L330 174.7 L330 225.6 Z" fill="#00cf7b"/></svg>
</body></html>
